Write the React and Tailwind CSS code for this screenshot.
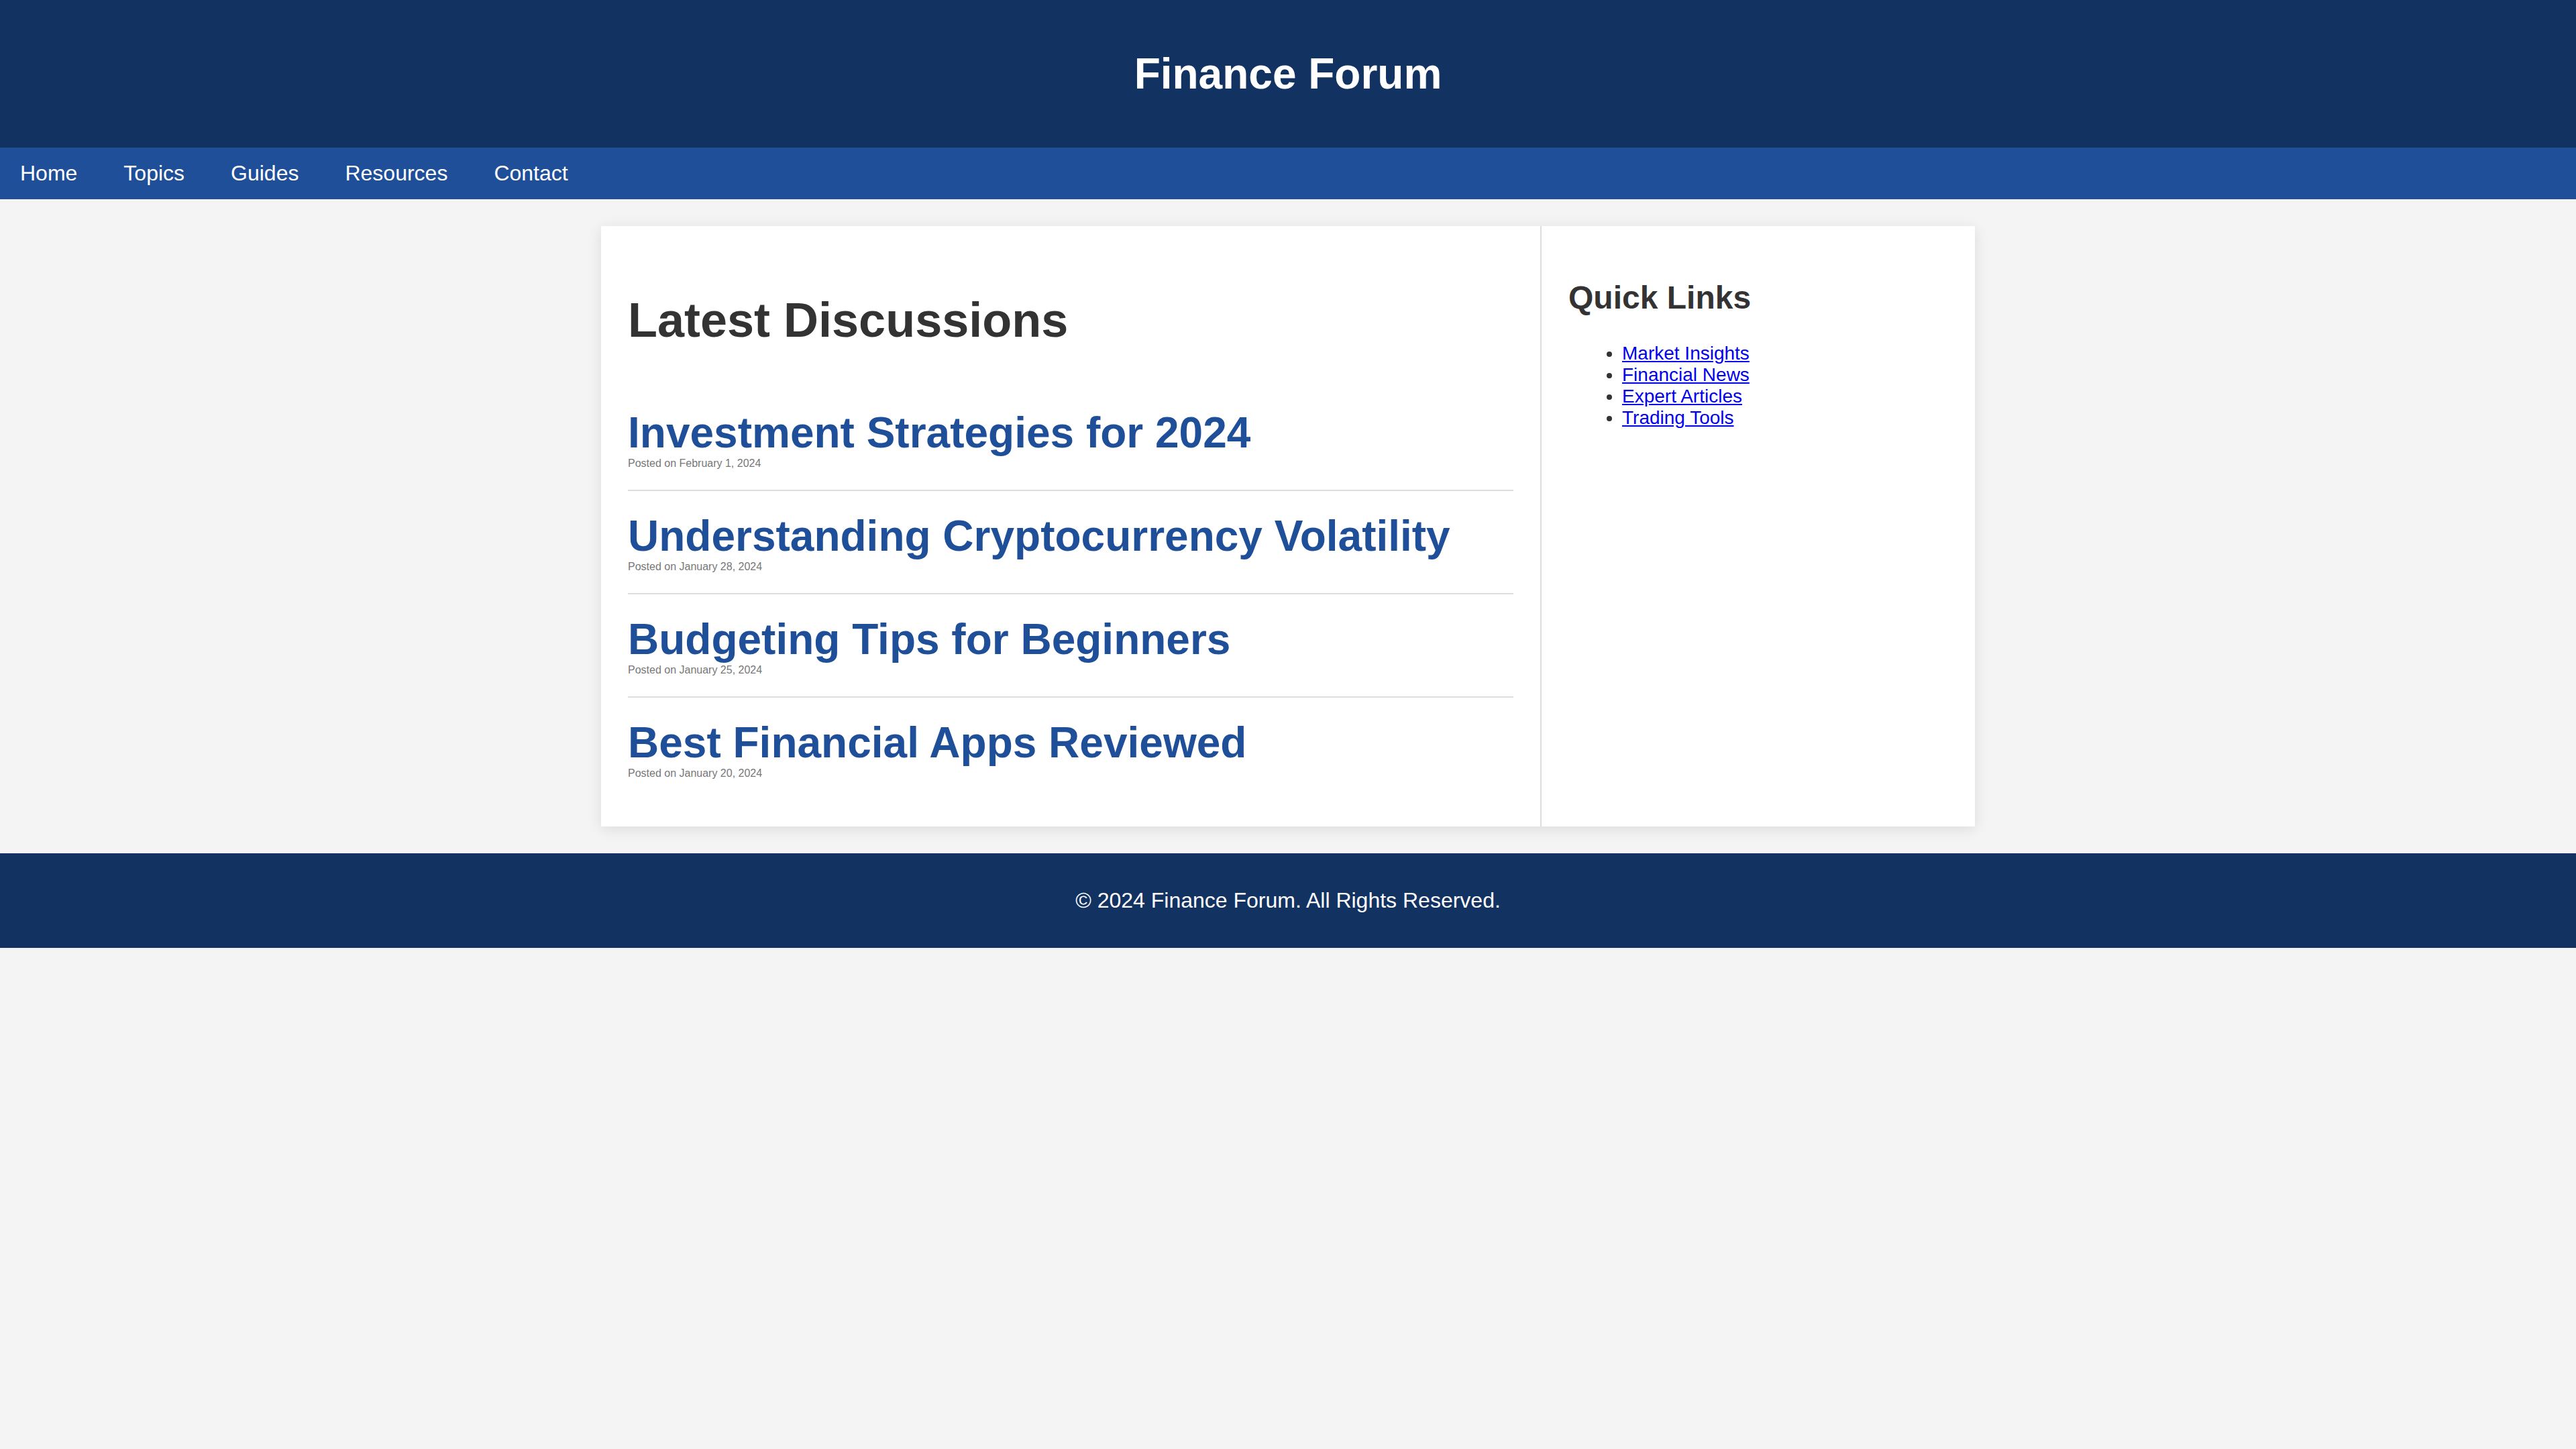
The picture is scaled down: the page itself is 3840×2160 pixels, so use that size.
const navLinks = ['Home', 'Topics', 'Guides', 'Resources', 'Contact'];

const discussions = [
  { title: 'Investment Strategies for 2024', date: 'February 1, 2024' },
  { title: 'Understanding Cryptocurrency Volatility', date: 'January 28, 2024' },
  { title: 'Budgeting Tips for Beginners', date: 'January 25, 2024' },
  { title: 'Best Financial Apps Reviewed', date: 'January 20, 2024' },
];

const quickLinks = ['Market Insights', 'Financial News', 'Expert Articles', 'Trading Tools'];

export default function App() {
  return (
    <div className="min-h-screen bg-[#f4f4f4] font-['Liberation_Sans',Arial,sans-serif] text-[#333333]">
      <header className="bg-[#123262] py-[73px] text-center text-white">
        <h1 className="text-[64px] leading-[74px] font-bold">Finance Forum</h1>
      </header>

      <nav className="bg-[#1f4f99] px-[30px] py-5">
        <ul className="flex flex-wrap gap-x-[69px] text-[32px] leading-[37px] text-white">
          {navLinks.map((label) => (
            <li key={label}>
              <a href="#">{label}</a>
            </li>
          ))}
        </ul>
      </nav>

      <div className="mx-auto my-10 flex max-w-[2048px] bg-white shadow-[0_4px_20px_rgba(0,0,0,0.1)]">
        <main className="min-w-0 flex-1 p-10">
          <h2 className="my-15 text-[72px] leading-[81px] font-bold">Latest Discussions</h2>
          {discussions.map(({ title, date }) => (
            <article key={title} className="border-b-2 border-[#dddddd] py-[30px] last:border-b-0">
              <h3 className="text-[64px] leading-[74px] font-bold text-[#1f4f99]">
                <a href="#">{title}</a>
              </h3>
              <p className="text-[16px] leading-[18px] text-[#777777]">Posted on {date}</p>
            </article>
          ))}
        </main>

        <aside className="w-[648px] border-l-2 border-[#dddddd] p-10">
          <h2 className="my-10 text-[48px] leading-[54px] font-bold">Quick Links</h2>
          <ul className="list-disc pl-20 text-[28px] leading-8">
            {quickLinks.map((label) => (
              <li key={label}>
                <a href="#" className="text-[#0000ee] underline">
                  {label}
                </a>
              </li>
            ))}
          </ul>
        </aside>
      </div>

      <footer className="bg-[#123262] py-[52px] text-center text-white">
        <p className="text-[32px] leading-[37px]">© 2024 Finance Forum. All Rights Reserved.</p>
      </footer>
    </div>
  );
}
